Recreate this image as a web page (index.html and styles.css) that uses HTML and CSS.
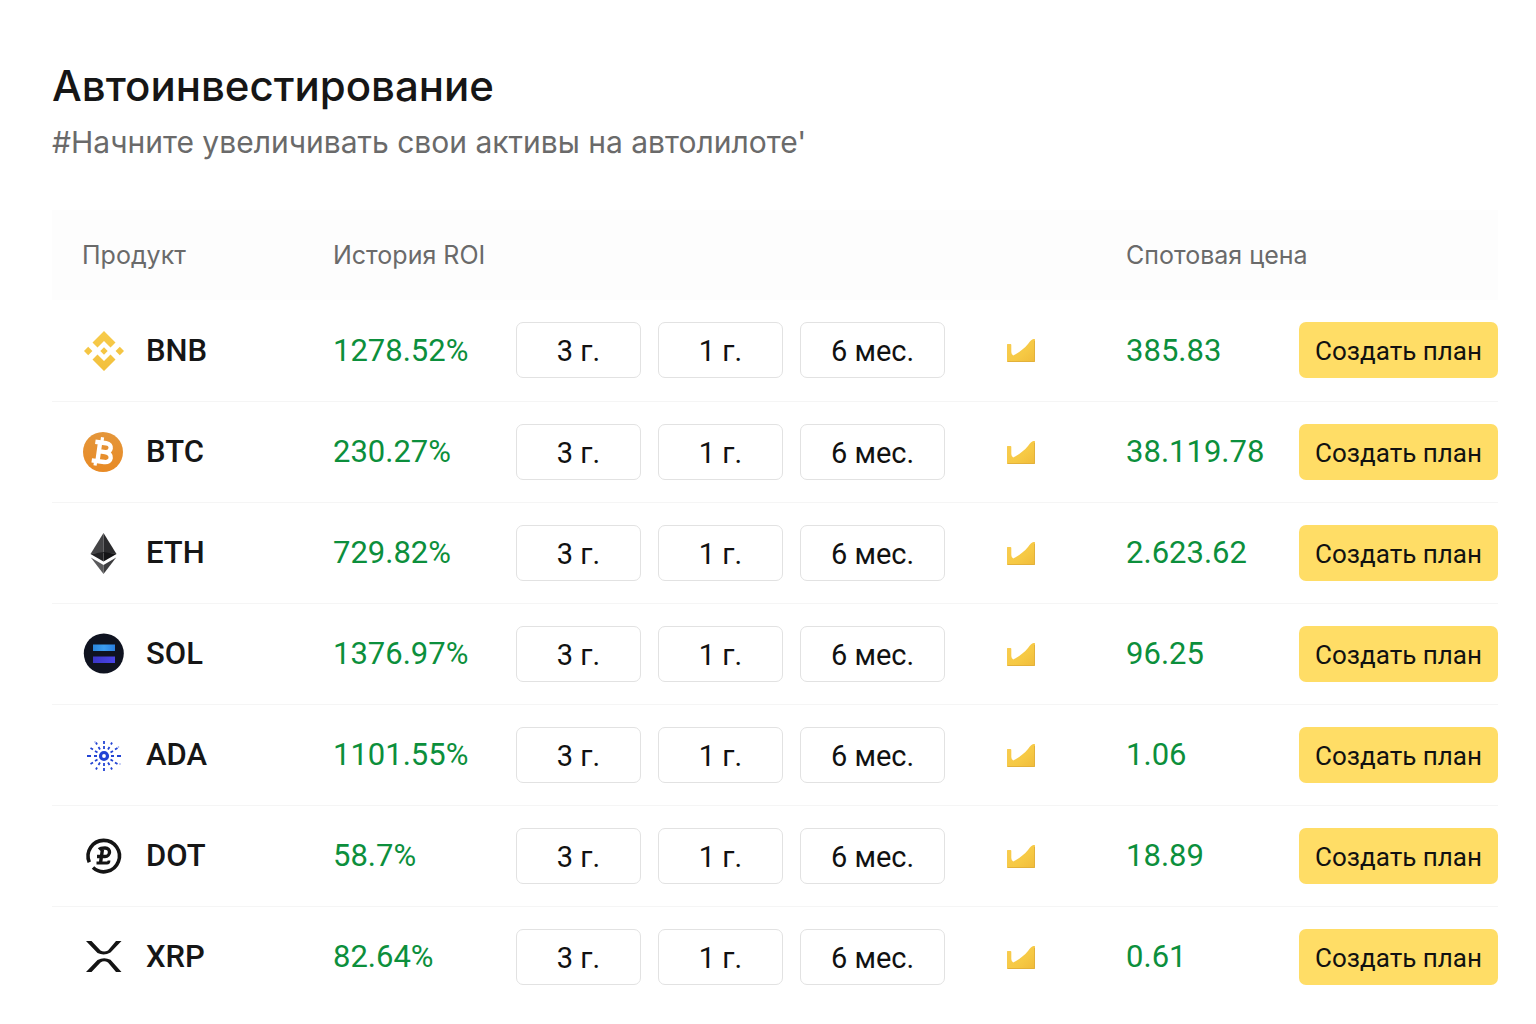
FILE: index.html
```html
<!DOCTYPE html>
<html lang="ru">
<head>
<meta charset="utf-8">
<meta name="viewport" content="width=device-width, initial-scale=1">
<title>Автоинвестирование</title>
<link rel="stylesheet" href="styles.css">
</head>
<body>
<svg class="sprite" aria-hidden="true">
  <defs>
    <linearGradient id="gold" x1="0" y1="0" x2="0" y2="1"><stop offset="0" stop-color="#f7cb4b"/><stop offset="1" stop-color="#f2c03c"/></linearGradient>
    <linearGradient id="orange" x1="0" y1="0" x2="0" y2="1"><stop offset="0" stop-color="#e4963a"/><stop offset="1" stop-color="#e88a25"/></linearGradient>
    <linearGradient id="sky" x1="0" y1="0" x2="1" y2="0"><stop offset="0" stop-color="#2a86dc"/><stop offset=".5" stop-color="#3c9df0"/><stop offset="1" stop-color="#2a7fe0"/></linearGradient>
    <linearGradient id="violet" x1="0" y1="0" x2="1" y2="0"><stop offset="0" stop-color="#3a35c8"/><stop offset="1" stop-color="#4a45e6"/></linearGradient>
    <linearGradient id="amber" x1="0" y1="0" x2="1" y2="1"><stop offset="0" stop-color="#f8cc52"/><stop offset=".6" stop-color="#f6c944"/><stop offset="1" stop-color="#f0bb3a"/></linearGradient>
  </defs>
  <symbol id="chart" viewBox="0 -1 30 26">
    <path d="M1 6.500Q1 6 1.500 6H4.500Q5.300 6 5.300 7V14Q5.500 17 7.200 17.500C12 15 18 11 22 6Q25 1.500 27.500 1H28.500Q29 1 29 1.500V23Q29 24 28 24H2Q1 24 1 23Z" fill="url(#amber)"/>
    <path d="M1.500 23.500H28.500V3" fill="none" stroke="#e3b13a" stroke-width="1"/>
  </symbol>
</svg>
<main class="page">
  <header class="intro">
    <h1 class="title">Автоинвестирование</h1>
    <p class="subtitle">#Начните увеличивать свои активы на автолилоте'</p>
  </header>
  <table class="plans">
    <colgroup><col class="col-product"><col class="col-roi"><col class="col-terms"><col class="col-chart"><col class="col-price"><col class="col-action"></colgroup>
    <thead>
      <tr><th class="first" scope="col">Продукт</th><th scope="col" colspan="3">История ROI</th><th scope="col" colspan="2">Спотовая цена</th></tr>
    </thead>
    <tbody>
      <tr>
        <td class="first"><div class="coin"><svg class="icon" viewBox="0 0 40 40" aria-hidden="true"><path fill="url(#gold)" transform="translate(1 1)" d="M20 0 31.500 11.500 26.500 16.500 20 10 13.500 16.500 8.500 11.500ZM20 40 8.500 28.500 13.500 23.500 20 30 26.500 23.500 31.500 28.500ZM20 16.300 23.700 20 20 23.700 16.300 20ZM4.200 15.800 8.400 20 4.200 24.200 0 20ZM35.800 15.800 40 20 35.800 24.200 31.600 20Z"/></svg><span>BNB</span></div></td>
        <td class="num">1278.52%</td>
        <td><div class="terms"><button type="button" class="term">3 г.</button><button type="button" class="term">1 г.</button><button type="button" class="term wide">6 мес.</button></div></td>
        <td><svg class="chart" aria-hidden="true"><use href="#chart"/></svg></td>
        <td class="num">385.83</td>
        <td><button type="button" class="create">Создать план</button></td>
      </tr>
      <tr>
        <td class="first"><div class="coin"><svg class="icon" viewBox="0 0 40 40" aria-hidden="true"><circle cx="20" cy="20" r="20" fill="url(#orange)"/><g transform="rotate(8 20 20)" fill="none" stroke="#fff"><path stroke-width="4.400" d="M15.800 10V31M11 10.900H22C28.800 10.900 28.800 19.800 22 19.800H15.500M22 19.800C30.500 19.800 30.500 29.800 22.500 29.800H10"/><path stroke-width="3.200" d="M17.500 5.500V11M14 29V34.500"/></g></svg><span>BTC</span></div></td>
        <td class="num">230.27%</td>
        <td><div class="terms"><button type="button" class="term">3 г.</button><button type="button" class="term">1 г.</button><button type="button" class="term wide">6 мес.</button></div></td>
        <td><svg class="chart" aria-hidden="true"><use href="#chart"/></svg></td>
        <td class="num">38.119.78</td>
        <td><button type="button" class="create">Создать план</button></td>
      </tr>
      <tr>
        <td class="first"><div class="coin"><svg class="icon" viewBox="0 0 40 40" aria-hidden="true"><path fill="#444446" d="M20.500 0V20L7.500 21Z"/><path fill="#2b2b2d" d="M20.500 0 33.500 21 20.500 20Z"/><path fill="#222224" d="M7.500 21 20.500 19V28.500Z"/><path fill="#141416" d="M33.500 21 20.500 19V28.500Z"/><path fill="#5a5a5c" d="M7.800 24.500 20.500 32V41Z"/><path fill="#3d3d3f" d="M33.200 24.500 20.500 32V41Z"/></svg><span>ETH</span></div></td>
        <td class="num">729.82%</td>
        <td><div class="terms"><button type="button" class="term">3 г.</button><button type="button" class="term">1 г.</button><button type="button" class="term wide">6 мес.</button></div></td>
        <td><svg class="chart" aria-hidden="true"><use href="#chart"/></svg></td>
        <td class="num">2.623.62</td>
        <td><button type="button" class="create">Создать план</button></td>
      </tr>
      <tr>
        <td class="first"><div class="coin"><svg class="icon" viewBox="0 0 40 40" aria-hidden="true"><circle cx="20.800" cy="19.500" r="20" fill="#0f1320"/><rect x="10" y="10.500" width="22" height="6.500" fill="url(#sky)"/><rect x="10" y="22.500" width="22" height="6.500" fill="url(#violet)"/></svg><span>SOL</span></div></td>
        <td class="num">1376.97%</td>
        <td><div class="terms"><button type="button" class="term">3 г.</button><button type="button" class="term">1 г.</button><button type="button" class="term wide">6 мес.</button></div></td>
        <td><svg class="chart" aria-hidden="true"><use href="#chart"/></svg></td>
        <td class="num">96.25</td>
        <td><button type="button" class="create">Создать план</button></td>
      </tr>
      <tr>
        <td class="first"><div class="coin"><svg class="icon" viewBox="0 0 40 40" aria-hidden="true"><g fill="none" stroke="#2344d4" transform="translate(21 21)"><circle r="3.500" stroke-width="3.200"/><path stroke-width="1.800" d="M0-7V-10M0-12V-15M0 7V10M0 12V15M-7 0H-10M-13 0H-17M7 0H10M13 0H17M-4-6.500-5.500-9M4-6.500 5.500-9M-4 6.500-5.500 9M4 6.500 5.500 9M-6.500-3.500-9-5M6.500-3.500 9-5M-6.500 3.500-9 5M6.500 3.500 9 5M-11-6.500-13.500-8M11-6.500 13.500-8M-11 6.500-13.500 8M11 6.500 13.500 8M-7-11.500-8-13.500M7-11.500 8-13.500M-7 11.500-8 13.500M7 11.500 8 13.500"/></g><g fill="#8b9ce8"><circle cx="35.500" cy="12" r=".8"/><circle cx="37" cy="29" r=".8"/><circle cx="12" cy="7" r=".8"/></g></svg><span>ADA</span></div></td>
        <td class="num">1101.55%</td>
        <td><div class="terms"><button type="button" class="term">3 г.</button><button type="button" class="term">1 г.</button><button type="button" class="term wide">6 мес.</button></div></td>
        <td><svg class="chart" aria-hidden="true"><use href="#chart"/></svg></td>
        <td class="num">1.06</td>
        <td><button type="button" class="create">Создать план</button></td>
      </tr>
      <tr>
        <td class="first"><div class="coin"><svg class="icon" viewBox="0 0 40 40" aria-hidden="true"><g fill="none" stroke="#141414"><path stroke-width="3.600" d="M10 31.500A15.700 15.700 0 1 0 6.300 26.200"/><path stroke-width="3.400" d="M16 13.500Q17.500 12 22 12C28.500 12 27.500 20.500 22 20.500H14M19.500 13 17.500 27"/><path stroke-width="2.800" d="M13.500 27H24Q26 27 26 24.500"/></g></svg><span>DOT</span></div></td>
        <td class="num">58.7%</td>
        <td><div class="terms"><button type="button" class="term">3 г.</button><button type="button" class="term">1 г.</button><button type="button" class="term wide">6 мес.</button></div></td>
        <td><svg class="chart" aria-hidden="true"><use href="#chart"/></svg></td>
        <td class="num">18.89</td>
        <td><button type="button" class="create">Создать план</button></td>
      </tr>
      <tr>
        <td class="first"><div class="coin"><svg class="icon" viewBox="0 0 40 40" aria-hidden="true"><path fill="#141414" d="M3 4H8.500L17.500 13.500Q21 15.500 25 13.500L33 4H38.500L27.500 15.500Q21 19 14.500 16ZM3 35H8.500L17.500 25.500Q21 23 25 25.500L33 35H38.500L27.500 22.800Q21 19.500 14.500 23Z"/></svg><span>XRP</span></div></td>
        <td class="num">82.64%</td>
        <td><div class="terms"><button type="button" class="term">3 г.</button><button type="button" class="term">1 г.</button><button type="button" class="term wide">6 мес.</button></div></td>
        <td><svg class="chart" aria-hidden="true"><use href="#chart"/></svg></td>
        <td class="num">0.61</td>
        <td><button type="button" class="create">Создать план</button></td>
      </tr>
    </tbody>
  </table>
</main>
</body>
</html>
```
FILE: styles.css
```css
* {
  box-sizing: border-box;
}

body {
  margin: 0;
  background: #fff;
  color: #161616;
  font-family: Roboto, "Noto Sans", sans-serif;
}

.sprite {
  display: block;
  width: 0;
  height: 0;
}

.page {
  padding: 60px 38px 16px 52px;
}

.intro {
  display: flex;
  flex-direction: column;
  gap: 10px;
  margin-bottom: 48px;
  font-family: Inter, "Noto Sans", sans-serif;
}

.title {
  margin: 0;
  font-size: 42px;
  font-weight: 500;
  line-height: 52px;
}

.subtitle {
  margin: 0;
  color: #6a6a6a;
  font-size: 30px;
  font-weight: 400;
  line-height: 40px;
}

.plans {
  width: 100%;
  border-collapse: collapse;
  table-layout: fixed;
}

.col-product { width: 281px; }
.col-roi { width: 183px; }
.col-terms { width: 490px; }
.col-chart { width: 120px; }
.col-action { width: 199px; }

th,
td {
  padding: 0;
  text-align: left;
  vertical-align: middle;
}

th {
  height: 90px;
  background: #fdfdfd;
  color: #6a6a6a;
  font-family: Inter, "Noto Sans", sans-serif;
  font-size: 25px;
  font-weight: 400;
}

td {
  height: 101px;
  border-bottom: 1px solid #f5f5f5;
}

tr:last-child td {
  border-bottom: 0;
}

.first {
  padding-left: 30px;
}

.coin {
  display: flex;
  align-items: center;
  gap: 22px;
  font-size: 31px;
  font-weight: 500;
}

.icon {
  width: 42px;
  height: 42px;
  padding: 1px;
  overflow: visible;
}

.num {
  color: #0c8f3c;
  font-size: 31px;
}

.terms {
  display: flex;
  gap: 17px;
}

.term,
.create {
  height: 56px;
  padding: 2px 0 0;
  border-radius: 7px;
  color: #111;
  font-family: inherit;
  cursor: pointer;
}

.term {
  width: 125px;
  border: 1px solid #e2e2e2;
  background: #fff;
  font-size: 29px;
}

.term.wide {
  width: 145px;
}

.chart {
  display: block;
  width: 30px;
  height: 26px;
}

.create {
  display: block;
  width: 100%;
  border: 0;
  background: #ffdd66;
  font-size: 26px;
}
```
